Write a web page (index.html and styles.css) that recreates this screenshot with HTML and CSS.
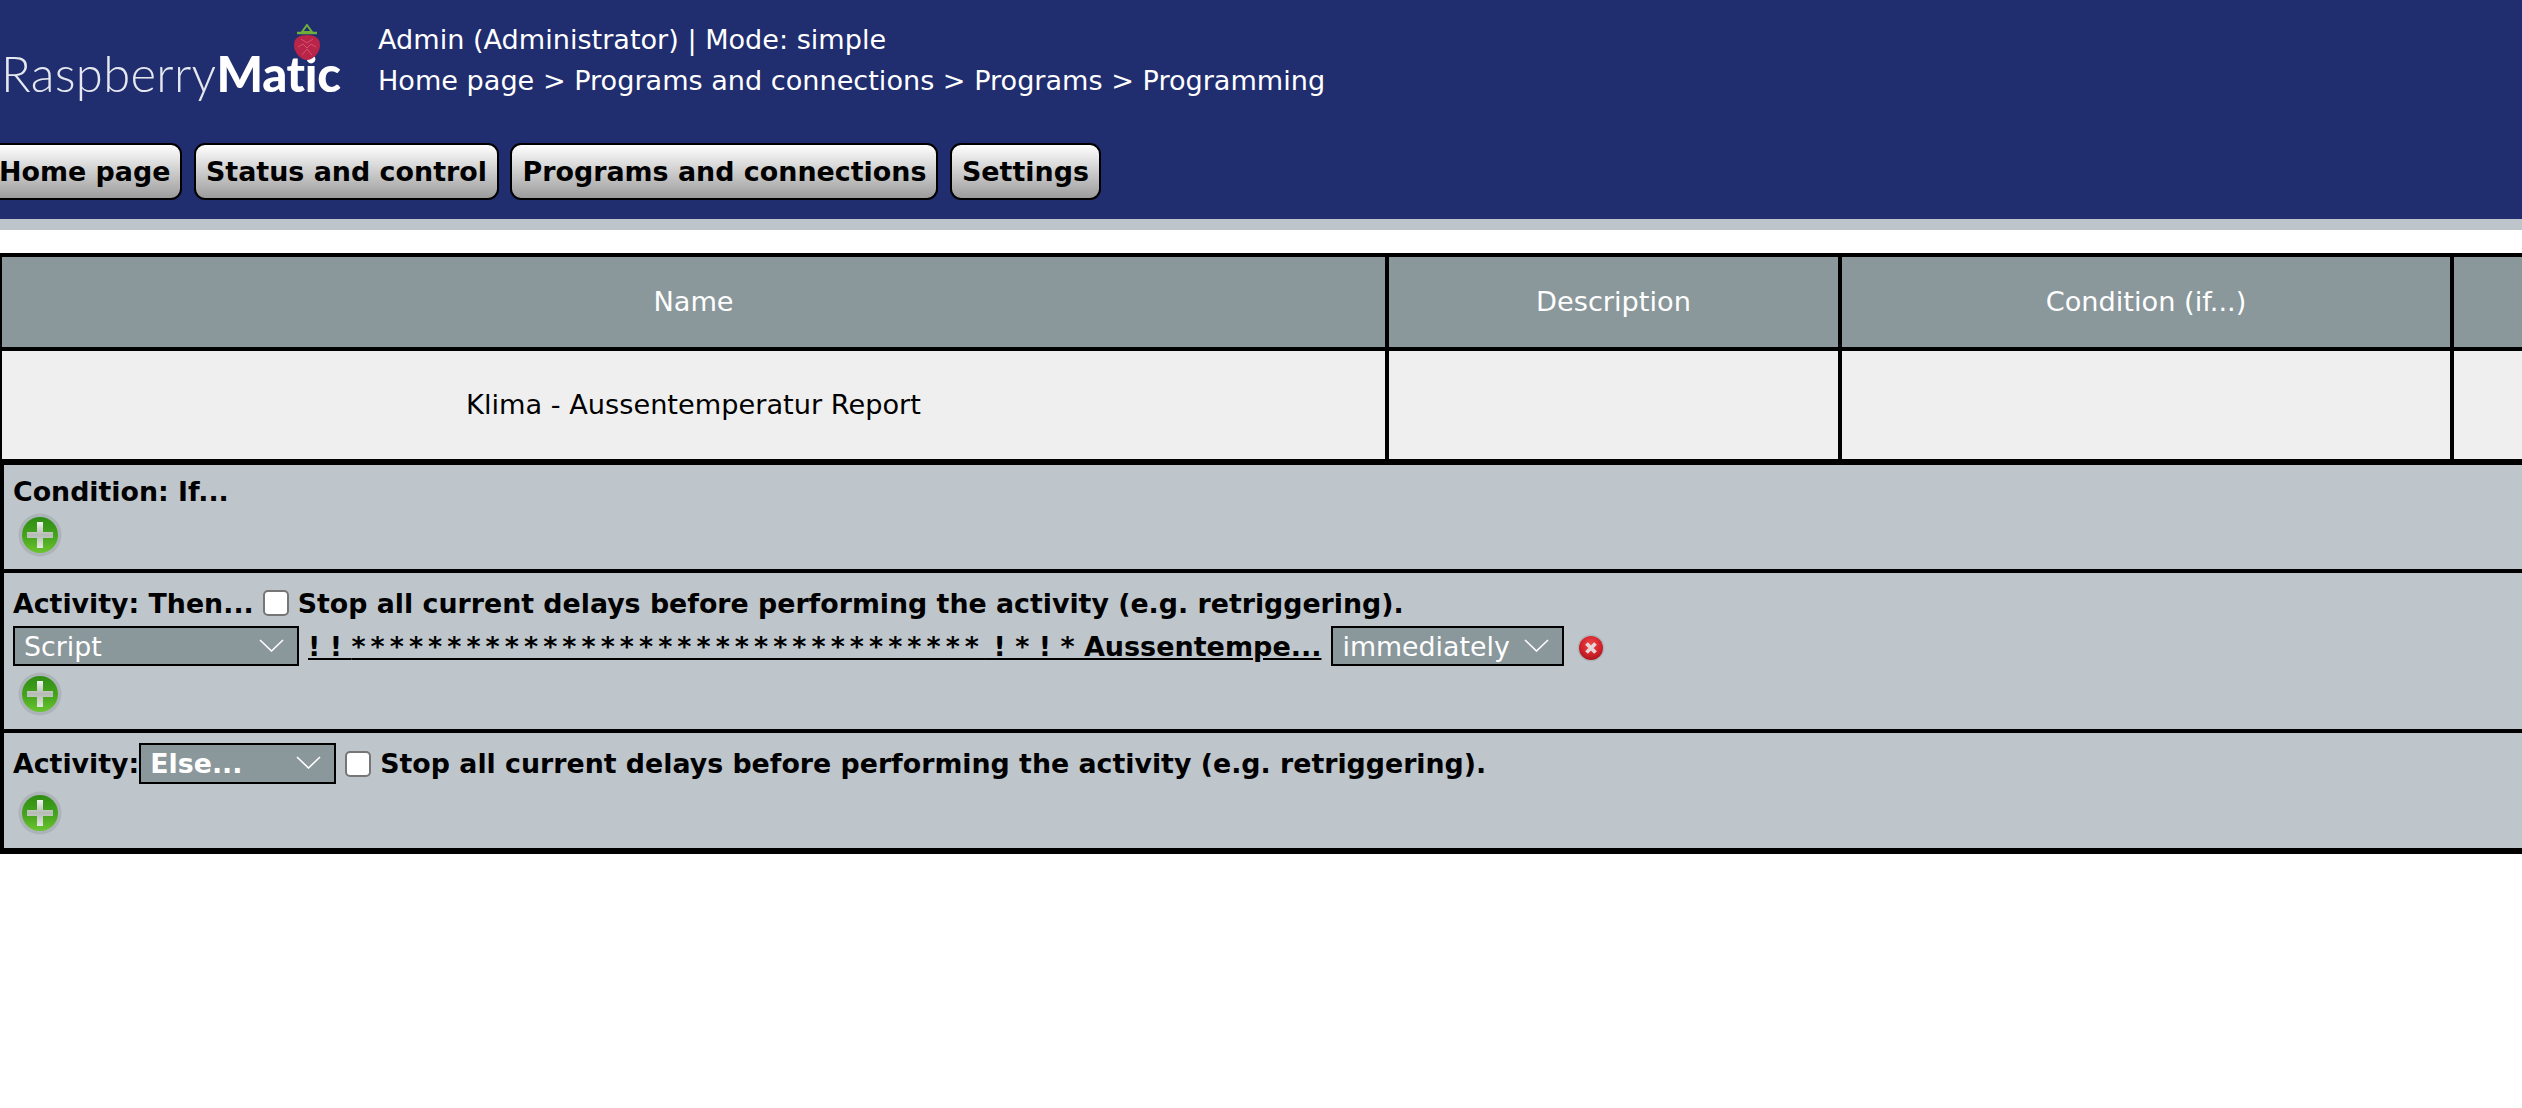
FILE: index.html
```html
<!DOCTYPE html>
<html>
<head>
  <title>RaspberryMatic - Programming</title>
  <link rel="stylesheet" href="styles.css">
</head>
<body>
  <svg class="defs" width="0" height="0">
    <defs>
      <linearGradient id="greenBall" x1="0" y1="0" x2="0" y2="1">
        <stop offset="0" stop-color="#2f8c14"/>
        <stop offset="0.55" stop-color="#45a51c"/>
        <stop offset="1" stop-color="#6cc430"/>
      </linearGradient>
      <linearGradient id="crossFill" x1="0" y1="0" x2="0" y2="1">
        <stop offset="0" stop-color="#f0f2f0"/>
        <stop offset="0.5" stop-color="#b4bab4"/>
        <stop offset="1" stop-color="#e4e8e4"/>
      </linearGradient>
      <radialGradient id="redBall" cx="50%" cy="35%" r="70%">
        <stop offset="0" stop-color="#ee4a4a"/>
        <stop offset="0.6" stop-color="#d2222a"/>
        <stop offset="1" stop-color="#a3141c"/>
      </radialGradient>
      <symbol id="addIcon" viewBox="0 0 44 44">
        <circle cx="22" cy="22" r="21.500" fill="#a4acb1" opacity="0.7"/>
        <circle cx="22" cy="22" r="18" fill="url(#greenBall)"/>
        <path d="M19 9h6v10h10v6H25v10h-6V25H9v-6h10z" fill="url(#crossFill)"/>
      </symbol>
      <symbol id="delIcon" viewBox="0 0 28 28">
        <circle cx="14" cy="14" r="13.500" fill="#a4acb1" opacity="0.6"/>
        <circle cx="14" cy="14" r="12" fill="url(#redBall)"/>
        <path d="M9.500 9.500l9 9M18.500 9.500l-9 9" stroke="#e6d8d8" stroke-width="3.800"/>
      </symbol>
      <symbol id="chevron" viewBox="0 0 25 13">
        <path d="M1 1l11.500 11L24 1" fill="none" stroke="#fff" stroke-width="1.600"/>
      </symbol>
    </defs>
  </svg>

  <div class="header">
    <div class="top">
      <div class="logo">
        <svg class="berry" viewBox="0 0 28 38">
          <path d="M14 1l5 7H9z" fill="none" stroke="#6fae3a" stroke-width="2"/>
          <path d="M4 9h20" stroke="#6fae3a" stroke-width="2.500"/>
          <path d="M14 11c8 0 13 3 13 10 0 8-7 15-13 15S1 29 1 21c0-7 5-10 13-10z" fill="#b92449"/>
          <path d="M8 15l6 4 6-4M5 23l5-3 4 4 4-4 5 3M9 31l5-6 5 6" fill="none" stroke="#d8506f" stroke-width="1"/>
        </svg>
        <span class="logo-thin">Raspberry</span><span class="logo-bold">Matic</span>
      </div>
      <div class="info">
        <div>Admin (Administrator) | Mode: simple</div>
        <div>Home page &gt; Programs and connections &gt; Programs &gt; Programming</div>
      </div>
    </div>
    <div class="nav">
      <div class="nav-btn">Home page</div>
      <div class="nav-btn">Status and control</div>
      <div class="nav-btn">Programs and connections</div>
      <div class="nav-btn">Settings</div>
    </div>
  </div>
  <div class="strip"></div>

  <div class="content">
    <table class="programs">
      <tr>
        <th class="col-name">Name</th>
        <th class="col-desc">Description</th>
        <th class="col-cond">Condition (if...)</th>
        <th class="col-rest"></th>
      </tr>
      <tr>
        <td>Klima - Aussentemperatur Report</td>
        <td></td>
        <td></td>
        <td></td>
      </tr>
    </table>

    <div class="rules">
      <div class="rule rule-if">
        <div class="line"><b>Condition: If...</b></div>
        <svg class="add"><use href="#addIcon"/></svg>
      </div>
      <div class="rule rule-then">
        <div class="line">
          <b>Activity: Then...</b>
          <input type="checkbox" class="check">
          <b>Stop all current delays before performing the activity (e.g. retriggering).</b>
        </div>
        <div class="line line-action">
          <div class="sel sel-script">
            <select><option>Script</option></select>
            <svg class="chev"><use href="#chevron"/></svg>
          </div>
          <a class="script-link" href="#">! ! <span class="stars">*********************************</span> ! * ! * Aussentempe...</a>
          <div class="sel sel-when">
            <select><option>immediately</option></select>
            <svg class="chev"><use href="#chevron"/></svg>
          </div>
          <svg class="del"><use href="#delIcon"/></svg>
        </div>
        <svg class="add"><use href="#addIcon"/></svg>
      </div>
      <div class="rule rule-else">
        <div class="line">
          <b>Activity:</b>
          <div class="sel sel-else">
            <select><option>Else...</option></select>
            <svg class="chev"><use href="#chevron"/></svg>
          </div>
          <input type="checkbox" class="check">
          <b>Stop all current delays before performing the activity (e.g. retriggering).</b>
        </div>
        <svg class="add"><use href="#addIcon"/></svg>
      </div>
    </div>
  </div>
</body>
</html>
```

FILE: styles.css
```css
html, body {
  margin: 0;
  padding: 0;
  background-color: #fff;
  overflow: hidden;
}

body {
  font-family: "DejaVu Sans", Verdana, sans-serif;
  font-size: 27px;
  color: #000;
  width: 2522px;
  height: 1108px;
}

.defs {
  display: block;
  height: 0;
}

.header {
  background-color: #202d6f;
  height: 219px;
  color: #fff;
}

.top {
  display: flex;
  height: 143px;
}

.logo {
  position: relative;
  width: 378px;
  padding-top: 43px;
  box-sizing: border-box;
  font-family: Lato, "Liberation Sans", sans-serif;
  font-size: 49px;
  line-height: 60px;
  color: #e6e8f0;
  white-space: nowrap;
  filter: blur(0.6px);
}

.logo-thin {
  font-weight: 300;
  margin-left: 1px;
  letter-spacing: 0.300px;
}

.logo-bold {
  font-weight: 900;
  color: #fff;
  letter-spacing: -0.300px;
}

.berry {
  position: absolute;
  left: 293px;
  top: 24px;
  width: 28px;
  height: 38px;
}

.info {
  font-size: 27.100px;
  line-height: 41px;
  padding-top: 19px;
  white-space: nowrap;
}

.nav {
  display: flex;
  gap: 11.500px;
  margin-left: -13px;
}

.nav-btn {
  height: 57px;
  line-height: 53px;
  box-sizing: border-box;
  padding: 0 10px;
  border: 2px solid #000;
  border-radius: 11px;
  background: linear-gradient(to bottom, #ffffff, #9c9c9c);
  color: #000;
  font-size: 26.900px;
  font-weight: bold;
  white-space: nowrap;
}

.strip {
  height: 11px;
  background-color: #bdc5cb;
}

.content {
  padding-top: 23px;
}

table.programs {
  border-collapse: collapse;
  table-layout: fixed;
  width: 2700px;
  border: 4px solid #000;
  margin-left: -2px;
}

.programs th, .programs td {
  border: 4px solid #000;
  padding: 0 0 2px;
  text-align: center;
  font-size: 27.200px;
  font-weight: normal;
}

.programs th {
  height: 88px;
  background-color: #8a979b;
  color: #fff;
}

.programs td {
  height: 106px;
  background-color: #efefef;
}

.col-name { width: 1383px; }
.col-desc { width: 449px; }
.col-cond { width: 608px; }

.rules {
  margin-top: -4px;
  width: 2700px;
  background-color: #bec6cc;
  border-top: 6px solid #000;
  border-bottom: 6px solid #000;
  border-left: 4px solid #000;
  box-sizing: border-box;
}

.rule {
  padding: 10px 0 0 9px;
  box-sizing: border-box;
}

.rule-if { height: 104px; }

.rule-then {
  height: 160px;
  padding-top: 14px;
  border-top: 4px solid #000;
}

.rule-else {
  height: 119px;
  border-top: 4px solid #000;
}

.line {
  display: flex;
  align-items: center;
  min-height: 32px;
  white-space: nowrap;
}

.line b {
  font-size: 26.800px;
}

.line-action {
  margin-top: 7px;
}

.check {
  appearance: none;
  box-sizing: border-box;
  width: 26px;
  height: 26px;
  margin: 0 9px 0 9px;
  background-color: #fff;
  border: 2px solid #767676;
  border-radius: 5px;
}

.sel {
  position: relative;
}

.sel select {
  appearance: none;
  display: block;
  box-sizing: border-box;
  height: 40px;
  padding: 0 0 0 9px;
  background-color: #8a979b;
  border: 2px solid #000;
  border-radius: 0;
  color: #fff;
  font-family: "DejaVu Sans", Verdana, sans-serif;
  font-size: 26.800px;
}

.chev {
  position: absolute;
  top: 13px;
  right: 15px;
  width: 25px;
  height: 13px;
}

.sel-script select { width: 286px; }
.sel-when select { width: 233px; }

.sel-when {
  margin-left: 10px;
}

.sel-else select {
  width: 197px;
  height: 41px;
  font-weight: bold;
}

.script-link {
  margin-left: 9px;
  color: #000;
  font-size: 27px;
  font-weight: bold;
}

.stars {
  letter-spacing: 5.050px;
}

.add {
  display: block;
  width: 44px;
  height: 44px;
  margin: 7px 0 0 5px;
  filter: blur(0.4px);
}

.rule-if .add {
  margin-top: 6px;
}

.rule-then .add {
  margin-top: 6px;
}

.del {
  width: 28px;
  height: 28px;
  margin: 3px 0 0 13px;
  filter: blur(0.4px);
}
```
